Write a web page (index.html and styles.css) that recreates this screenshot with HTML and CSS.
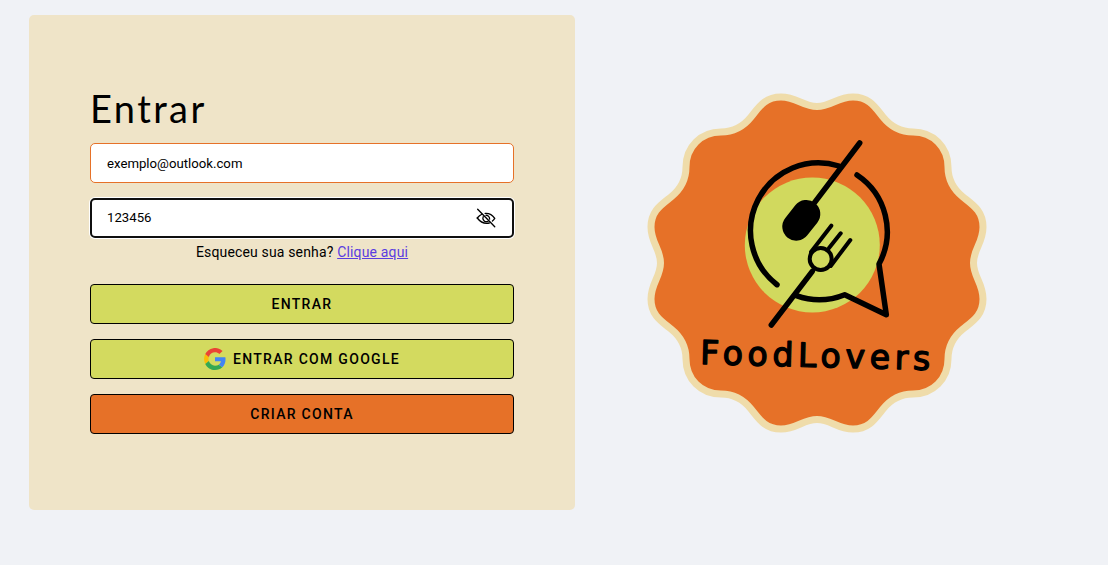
FILE: index.html
```html
<!DOCTYPE html>
<html lang="pt-BR">
<head>
    <meta charset="UTF-8">
    <meta name="viewport" content="width=device-width, initial-scale=1.0">
    <title>FoodLovers - Entrar</title>
    <link rel="stylesheet" href="styles.css">
</head>
<body>
    <main class="page">
        <section class="login-card">
            <h1 class="login-title">Entrar</h1>
            <form class="login-form">
                <input class="field" type="text" value="exemplo@outlook.com">
                <div class="password-box">
                    <input class="field field-focus" type="text" value="123456">
                    <svg class="eye-icon" viewBox="0 0 24 24" fill="none" stroke="#000" stroke-width="1.6" stroke-linecap="round" stroke-linejoin="round">
                        <path d="M1.500 12c1.800-2.200 3.500-3.600 5.500-4.500"/>
                        <path d="M11 6.500c4.600-.4 8.800 2 11.500 6-.8 1.200-1.700 2.300-2.800 3.200"/>
                        <path d="M16 18c-5 1.300-10.500-.8-14.500-6"/>
                        <path d="M8.600 10.400a4.300 4.300 0 0 0 5.800 5.600"/>
                        <path d="M12 8.700a4.300 4.300 0 0 1 4.300 4.600"/>
                        <path d="M2 1.500l20.500 21"/>
                    </svg>
                </div>
                <p class="forgot">Esqueceu sua senha? <a href="#">Clique aqui</a></p>
                <button class="btn btn-green" type="button">ENTRAR</button>
                <button class="btn btn-green" type="button">
                    <svg class="google-icon" viewBox="0 0 48 48">
                        <path fill="#fbbc05" d="M10.500 28.600a14.300 14.300 0 0 1 0-9.200l-7.800-6.100a24 24 0 0 0 0 21.400z"/>
                        <path fill="#ea4335" d="M24 9.500c3.700 0 7 1.300 9.600 3.800l6.900-6.900A23.900 23.900 0 0 0 2.700 13.300l7.800 6.100C12.400 13.600 17.700 9.500 24 9.500z"/>
                        <path fill="#34a853" d="M24 48c6.500 0 11.900-2.100 15.900-5.800l-7.600-5.900c-2.100 1.400-4.900 2.200-8.300 2.200-6.300 0-11.600-4.100-13.500-9.900l-7.800 6.100C6.600 42.600 14.600 48 24 48z"/>
                        <path fill="#4285f4" d="M47 24.500c0-1.600-.1-3.100-.4-4.500H24v9.100h13c-.6 3-2.200 5.500-4.700 7.200l7.600 5.900C44.400 38.100 47 31.900 47 24.500z"/>
                    </svg>
                    ENTRAR COM GOOGLE
                </button>
                <button class="btn btn-orange" type="button">CRIAR CONTA</button>
            </form>
        </section>

        <svg class="logo" viewBox="-170 -170 340 340">
            <path class="logo-badge" d="M0,-156.500 C14,-156.500 20,-166 36,-166 C52,-166 58,-156 66,-146 C74,-136 84,-131 96,-131 C116,-131 131,-116 131,-96 C131,-84 136,-74 146,-66 C156,-58 166,-52 166,-36 C166,-20 156.500,-14 156.500,0 C156.500,14 166,20 166,36 C166,52 156,58 146,66 C136,74 131,84 131,96 C131,116 116,131 96,131 C84,131 74,136 66,146 C58,156 52,166 36,166 C20,166 14,156.500 0,156.500 C-14,156.500 -20,166 -36,166 C-52,166 -58,156 -66,146 C-74,136 -84,131 -96,131 C-116,131 -131,116 -131,96 C-131,84 -136,74 -146,66 C-156,58 -166,52 -166,36 C-166,20 -156.500,14 -156.500,0 C-156.500,-14 -166,-20 -166,-36 C-166,-52 -156,-58 -146,-66 C-136,-74 -131,-84 -131,-96 C-131,-116 -116,-131 -96,-131 C-84,-131 -74,-136 -66,-146 C-58,-156 -52,-166 -36,-166 C-20,-166 -14,-156.500 0,-156.500 Z"/>
            <circle class="logo-circle" cx="-4.700" cy="-18" r="67.500"/>
            <g class="logo-lines">
                <path d="M-40,21.700 A68,68 0 0 1 22,-97"/>
                <path d="M40,-88 A68,68 0 0 1 62,1 L69.300,51.700 L27.700,31.700 A68,68 0 0 1 -20.700,32.700"/>
                <path d="M42.700,-120 L-2.300,-60.700"/>
                <path class="logo-spoon" d="M-10.700,-49 L-20.700,-36.300"/>
                <path d="M-45.700,62 L-4.700,8.300"/>
                <circle class="logo-fork" cx="3.700" cy="-4" r="11"/>
                <path class="logo-fork" d="M14.300,-37.300 L-6,-11 M23.700,-29.700 L12,-15 M33.300,-23 L13.700,3"/>
            </g>
            <text class="logo-text" x="-117" y="104" textLength="230" transform="rotate(1.500 0 100)">FoodLovers</text>
        </svg>
    </main>
</body>
</html>
```

FILE: styles.css
```css
* {
    box-sizing: border-box;
}
body {
    margin: 0;
    background-color: #f0f2f6;
    font-family: Roboto, Arial, sans-serif;
    color: #000;
}
.page {
    display: flex;
    align-items: center;
    padding: 15px 29px;
}
.login-card {
    width: 546px;
    height: 495px;
    padding: 70px 61px 0;
    background-color: #efe4c8;
    border-radius: 5px;
}
.login-title {
    margin: 0 0 12px;
    font-family: Lato, sans-serif;
    font-size: 38px;
    font-weight: 400;
    line-height: 46px;
    letter-spacing: 2.400px;
}
.login-form {
    display: flex;
    flex-direction: column;
}
.field {
    display: block;
    width: 100%;
    height: 40px;
    padding: 0 16px;
    border: 1px solid #e67128;
    border-radius: 5px;
    background-color: #fff;
    font-family: Roboto, Arial, sans-serif;
    font-size: 13.200px;
    color: #000;
    outline: none;
}
.field-focus {
    border: 2px solid #101010;
    padding: 0 15px 2px;
    box-shadow: 0 0 0 1px #fff;
}
.password-box {
    position: relative;
    margin-top: 15px;
}
.eye-icon {
    position: absolute;
    right: 18px;
    top: 10px;
    width: 20px;
    height: 20px;
}
.forgot {
    margin: 5px 0 23px;
    font-size: 14px;
    line-height: 18px;
    letter-spacing: 0.160px;
    text-align: center;
}
.forgot a {
    color: #5a3de0;
}
.btn {
    display: flex;
    align-items: center;
    justify-content: center;
    gap: 7px;
    height: 40px;
    margin-bottom: 15px;
    padding-bottom: 1px;
    border: 1px solid #000;
    border-radius: 4px;
    font-family: Roboto, Arial, sans-serif;
    font-size: 14px;
    font-weight: 500;
    letter-spacing: 1.300px;
    color: #000;
}
.btn:last-child {
    margin-bottom: 0;
}
.btn-green {
    background-color: #d3da5f;
}
.btn-orange {
    background-color: #e67128;
}
.google-icon {
    width: 22px;
    height: 22px;
}
.logo {
    width: 340px;
    height: 340px;
    margin-left: 72px;
}
.logo-badge {
    fill: #e67128;
    stroke: #efdcaa;
    stroke-width: 7;
}
.logo-circle {
    fill: #d1d95e;
}
.logo-lines {
    fill: none;
    stroke: #000;
    stroke-width: 5.500;
    stroke-linecap: round;
    stroke-linejoin: round;
}
.logo-lines .logo-spoon {
    stroke-width: 28;
}
.logo-lines .logo-fork {
    stroke-width: 4;
}
.logo-text {
    font-family: "DejaVu Sans", sans-serif;
    font-size: 33px;
    font-weight: 400;
    fill: #000;
    stroke: #000;
    stroke-width: 1.400;
    stroke-linejoin: round;
}
```
